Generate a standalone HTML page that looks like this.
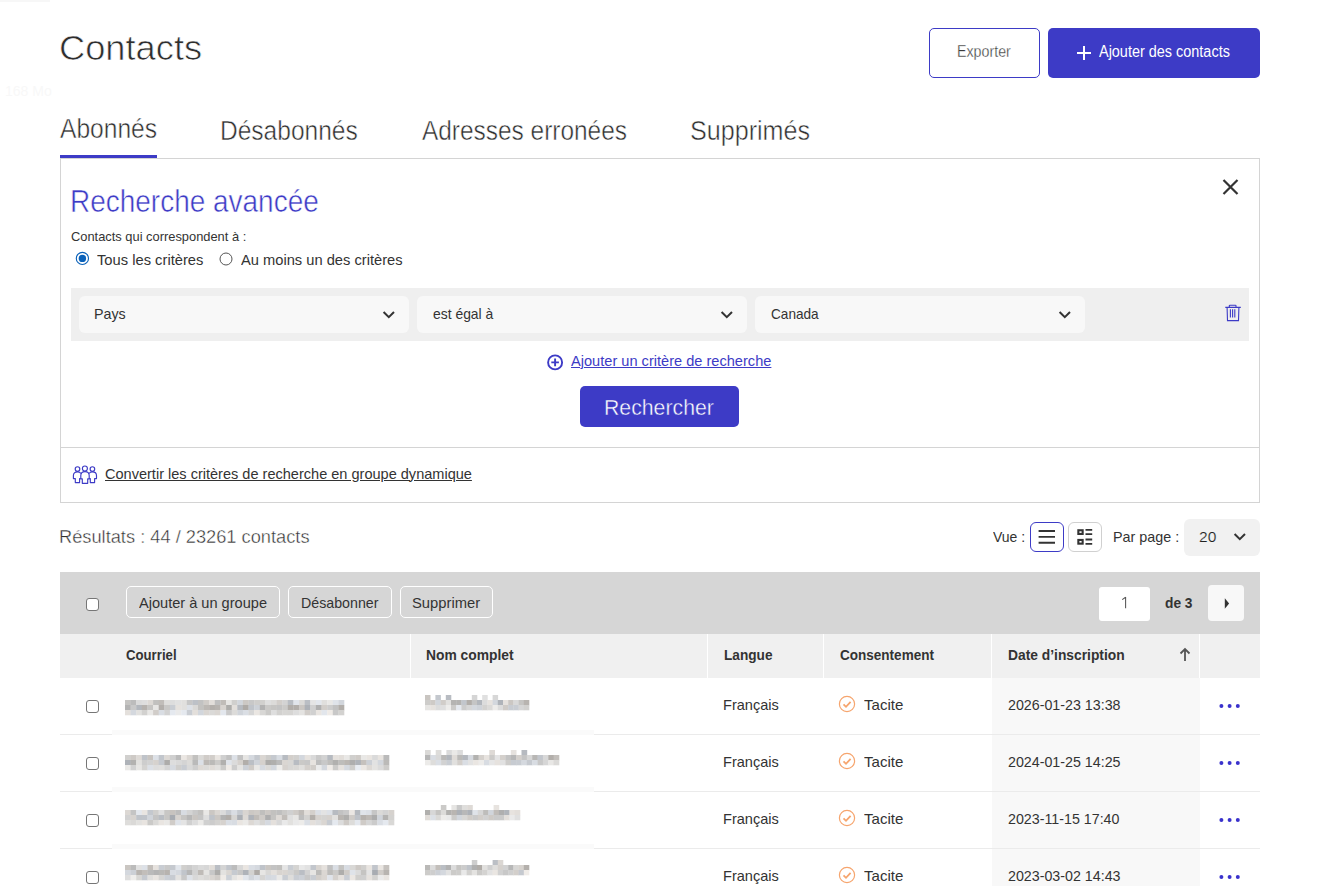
<!DOCTYPE html>
<html><head><meta charset="utf-8">
<style>
*{box-sizing:border-box;margin:0;padding:0}
html,body{width:1322px;height:886px;overflow:hidden;background:#fff}
body{position:relative;font-family:"Liberation Sans",sans-serif;color:#333}
.a{position:absolute;white-space:nowrap}
.t{position:absolute;white-space:nowrap;line-height:1;transform-origin:0 0}
.P{color:#3d3bc6}
.fr{font-size:15px;color:#333}
</style></head><body>

<!-- header -->
<div class="t" style="left:5px;top:84px;font-size:14px;color:#f8f8f8">168 Mo</div>
<div class="a" style="left:0;top:0;width:50px;height:2px;background:#f7f7f7"></div>

<div class="t" id="title" style="left:59.1px;top:31.0px;font-size:35.5px;color:#2e2e2e;-webkit-text-stroke:0.7px #fff;transform:scaleX(1.0215)">Contacts</div>
<div class="a" style="left:929px;top:28px;width:111px;height:50px;border:1px solid #3d3bc6;border-radius:5px"></div>
<div class="t" id="exp" style="left:957.3px;top:44.0px;font-size:15.8px;color:#3a3a3a;-webkit-text-stroke:0.3px #fff;transform:scaleX(0.9009)">Exporter</div>
<div class="a" style="left:1048px;top:28px;width:212px;height:50px;background:#3d3bc6;border-radius:5px"></div>
<svg class="a" style="left:1076px;top:45px" width="16" height="16"><path d="M8 1V15M1 8H15" stroke="#fff" stroke-width="2"/></svg>
<div class="t" id="addc" style="left:1099.0px;top:44.0px;font-size:15.8px;color:#fff;transform:scaleX(0.9143)">Ajouter des contacts</div>

<!-- tabs -->
<div class="t" id="tab1" style="left:60.0px;top:115.6px;font-size:26.8px;color:#2e2e2e;-webkit-text-stroke:0.5px #fff;transform:scaleX(0.9177)">Abonnés</div>
<div class="t" id="tab2" style="left:219.9px;top:118.0px;font-size:26.8px;color:#2e2e2e;-webkit-text-stroke:0.5px #fff;transform:scaleX(0.9152)">Désabonnés</div>
<div class="t" id="tab3" style="left:422.0px;top:118.0px;font-size:26.8px;color:#2e2e2e;-webkit-text-stroke:0.5px #fff;transform:scaleX(0.9114)">Adresses erronées</div>
<div class="t" id="tab4" style="left:689.6px;top:118.0px;font-size:26.8px;color:#2e2e2e;-webkit-text-stroke:0.5px #fff;transform:scaleX(0.9371)">Supprimés</div>
<div class="a" style="left:60px;top:155px;width:97px;height:3px;background:#3d3bc6"></div>

<!-- panel -->
<div class="a" style="left:60px;top:158px;width:1200px;height:345px;border:1px solid #d4d4d4"></div>
<div class="t P" id="rech" style="left:70.0px;top:186.4px;font-size:30.5px;-webkit-text-stroke:0.5px #fff;transform:scaleX(0.917)">Recherche avancée</div>
<svg class="a" style="left:1221px;top:178px" width="19" height="18"><path d="M2.5 2L16.5 16M16.5 2L2.5 16" stroke="#333" stroke-width="2.2"/></svg>
<div class="t" id="cqc" style="left:71.0px;top:230.0px;font-size:13.3px;color:#333;transform:scaleX(0.9675)">Contacts qui correspondent à :</div>
<svg class="a" style="left:75px;top:251px" width="15" height="15"><circle cx="7.4" cy="7.4" r="6.1" fill="#fff" stroke="#0a61b9" stroke-width="1.15"/><circle cx="7.4" cy="7.4" r="3.7" fill="#0a61b9"/></svg>
<div class="t" id="tous" style="left:96.8px;top:251.9px;font-size:15px;color:#333;transform:scaleX(0.9817)">Tous les critères</div>
<svg class="a" style="left:219px;top:252px" width="14" height="14"><circle cx="7" cy="7" r="6" fill="#fff" stroke="#555" stroke-width="1"/></svg>
<div class="t" id="aumoins" style="left:241.0px;top:252.3px;font-size:15px;color:#333;transform:scaleX(0.9787)">Au moins un des critères</div>

<div class="a" style="left:71px;top:288px;width:1178px;height:53px;background:#efefef"></div>
<div class="a" style="left:79px;top:296px;width:330px;height:37px;background:#f8f8f8;border-radius:6px"></div>
<div class="a" style="left:417px;top:296px;width:330px;height:37px;background:#f8f8f8;border-radius:6px"></div>
<div class="a" style="left:755px;top:296px;width:330px;height:37px;background:#f8f8f8;border-radius:6px"></div>
<div class="t" id="pays" style="left:93.6px;top:306.1px;font-size:15px;color:#333;transform:scaleX(0.9494)">Pays</div>
<div class="t" id="egal" style="left:432.9px;top:306.0px;font-size:15px;color:#333;transform:scaleX(0.9268)">est égal à</div>
<div class="t" id="canada" style="left:771.0px;top:306.0px;font-size:15px;color:#333;transform:scaleX(0.9068)">Canada</div>
<svg class="a" style="left:382px;top:309px" width="14" height="11"><path d="M1.6 3L6.8 8.2L12 3" fill="none" stroke="#333" stroke-width="2"/></svg>
<svg class="a" style="left:720px;top:309px" width="14" height="11"><path d="M1.6 3L6.8 8.2L12 3" fill="none" stroke="#333" stroke-width="2"/></svg>
<svg class="a" style="left:1058px;top:309px" width="14" height="11"><path d="M1.6 3L6.8 8.2L12 3" fill="none" stroke="#333" stroke-width="2"/></svg>
<svg class="a" style="left:1225px;top:304px" width="17" height="18"><path d="M0.3 3.4H15.8M4.3 3.4V1.8Q4.3 1.2 4.9 1.2H10.4Q11 1.2 11 1.8V3.4M2.1 3.4L2.5 16.6H13.5L13.9 3.4M5.4 5.2V13.4M7.6 5.2V13.4M9.8 5.2V13.4" fill="none" stroke="#3d3bc6" stroke-width="1.1"/></svg>

<svg class="a" style="left:546px;top:354px" width="18" height="17"><circle cx="9.1" cy="8.4" r="7" fill="none" stroke="#3d3bc6" stroke-width="1.9"/><path d="M9.1 4.6V12.2M5.3 8.4H12.9" stroke="#3d3bc6" stroke-width="1.9"/></svg>
<div class="t P" id="ajcrit" style="left:571.1px;top:352.6px;font-size:15px;text-decoration:underline;transform:scaleX(0.973)">Ajouter un critère de recherche</div>
<div class="a" style="left:580px;top:386px;width:159px;height:41px;background:#3d3bc6;border-radius:5px"></div>
<div class="t" id="rbtn" style="left:604.1px;top:396.6px;font-size:22px;color:#fff;-webkit-text-stroke:0.4px #3d3bc6;transform:scaleX(0.9661)">Rechercher</div>

<div class="a" style="left:61px;top:447px;width:1198px;height:1px;background:#d4d4d4"></div>
<svg class="a" style="left:68px;top:460px" width="34" height="30"><g fill="none" stroke="#3d3bc6" stroke-width="1.15" stroke-linejoin="round"><circle cx="9.5" cy="9" r="2.3"/><circle cx="16.9" cy="8.5" r="2.5"/><circle cx="24.4" cy="9" r="2.3"/><path d="M12.9 13.3Q11.7 11.9 9.5 11.9Q5.4 11.9 5.4 15.6V18.6H7.3V22.6H11.6V18.6H12.8"/><path d="M21.1 13.3Q22.3 11.9 24.4 11.9Q28.5 11.9 28.5 15.6V18.6H26.6V22.6H22.3V18.6H21.1"/><path d="M14.3 18.8H12.8V15.6Q12.8 11.6 17 11.6Q21.2 11.6 21.2 15.6V18.8H19.7V23.3H14.3Z"/></g></svg>
<div class="t" id="conv" style="left:105.0px;top:465.5px;font-size:15px;color:#333;text-decoration:underline;transform:scaleX(0.9693)">Convertir les critères de recherche en groupe dynamique</div>

<!-- results -->
<div class="t" id="res" style="left:58.7px;top:527.5px;font-size:18px;color:#2e2e2e;-webkit-text-stroke:0.4px #fff;transform:scaleX(1.0137)">Résultats : 44 / 23261 contacts</div>
<div class="t" id="vue" style="left:993.2px;top:529.4px;font-size:15px;color:#333;transform:scaleX(0.9333)">Vue :</div>
<div class="a" style="left:1030px;top:522px;width:34px;height:30px;border:1.3px solid #3d3bc6;border-radius:6px"></div>
<div class="a" style="left:1068px;top:522px;width:34px;height:30px;border:1.3px solid #d0d0d0;border-radius:6px"></div>
<svg class="a" style="left:1030px;top:522px" width="72" height="30"><path d="M8.6 9H25M8.6 14.9H25M8.6 20.8H25" stroke="#333" stroke-width="1.9"/><g fill="none" stroke="#333" stroke-width="2.1"><rect x="48.35" y="8.25" width="4.3" height="3.7"/><rect x="48.35" y="17.95" width="4.3" height="3.7"/></g><path d="M55.5 7.8H62.2M55.5 12.1H62.2M55.5 17.5H62.2M55.5 21.9H62.2" stroke="#333" stroke-width="1.8"/></svg>
<div class="t" id="parpage" style="left:1113.4px;top:529.4px;font-size:15px;color:#333;transform:scaleX(0.9564)">Par page :</div>
<div class="a" style="left:1184px;top:519px;width:76px;height:37px;background:#f1f1f1;border-radius:6px"></div>
<div class="t" id="vingt" style="left:1198.6px;top:529.3px;font-size:15px;color:#333;-webkit-text-stroke:0.2px #f1f1f1;color:#222;transform:scaleX(1.0365)">20</div>
<svg class="a" style="left:1233px;top:531px" width="14" height="11"><path d="M1.6 3L6.8 8.2L12 3" fill="none" stroke="#333" stroke-width="2"/></svg>

<!-- toolbar -->
<div class="a" style="left:60px;top:572px;width:1200px;height:62px;background:#d6d6d6"></div>
<div class="a" style="left:86px;top:598px;width:13px;height:13px;background:#fff;border:1px solid #767676;border-radius:3px"></div>
<div class="a" style="left:126px;top:586px;width:154px;height:32px;border:1px solid #fff;border-radius:5px"></div>
<div class="a" style="left:288px;top:586px;width:104px;height:32px;border:1px solid #fff;border-radius:5px"></div>
<div class="a" style="left:400px;top:586px;width:93px;height:32px;border:1px solid #fff;border-radius:5px"></div>
<div class="t" id="b1" style="left:139.0px;top:594.8px;font-size:15px;color:#333;transform:scaleX(0.9713)">Ajouter à un groupe</div>
<div class="t" id="b2" style="left:300.9px;top:594.8px;font-size:15px;color:#333;transform:scaleX(0.9474)">Désabonner</div>
<div class="t" id="b3" style="left:412.4px;top:594.8px;font-size:15px;color:#333;transform:scaleX(0.9844)">Supprimer</div>
<div class="a" style="left:1099px;top:587px;width:51px;height:34px;background:#fff;border-radius:3px"></div>
<svg class="a" style="left:1118px;top:594px" width="12" height="16"><path d="M7.6 3V14.2M4.2 5.6L7.6 3.2" fill="none" stroke="#555" stroke-width="1.05"/></svg>
<div class="t" id="de3" style="left:1164.6px;top:594.8px;font-size:15px;color:#333;font-weight:bold;transform:scaleX(0.9166)">de 3</div>
<div class="a" style="left:1208px;top:585px;width:36px;height:36px;background:#f8f8f8;border-radius:4px"></div>
<svg class="a" style="left:1222px;top:597px" width="9" height="13"><path d="M2.8 1.2L7.1 6.5L2.8 11.8Z" fill="#333"/></svg>

<!-- header row -->
<div class="a" style="left:60px;top:634px;width:1200px;height:44px;background:#f0f0f0"></div>
<div class="a" style="left:410px;top:634px;width:1px;height:44px;background:#fff"></div>
<div class="a" style="left:707px;top:634px;width:1px;height:44px;background:#fff"></div>
<div class="a" style="left:823px;top:634px;width:1px;height:44px;background:#fff"></div>
<div class="a" style="left:991px;top:634px;width:1px;height:44px;background:#fff"></div>
<div class="a" style="left:1199px;top:634px;width:1px;height:44px;background:#fff"></div>
<div class="t" id="h1" style="left:125.7px;top:647.1px;font-size:15px;color:#333;font-weight:bold;transform:scaleX(0.8788)">Courriel</div>
<div class="t" id="h2" style="left:426.1px;top:647.1px;font-size:15px;color:#333;font-weight:bold;transform:scaleX(0.9221)">Nom complet</div>
<div class="t" id="h3" style="left:723.8px;top:647.1px;font-size:15px;color:#333;font-weight:bold;transform:scaleX(0.9095)">Langue</div>
<div class="t" id="h4" style="left:840.0px;top:647.1px;font-size:15px;color:#333;font-weight:bold;transform:scaleX(0.9019)">Consentement</div>
<div class="t" id="h5" style="left:1007.5px;top:647.4px;font-size:15px;color:#333;font-weight:bold;transform:scaleX(0.9207)">Date d’inscription</div>
<svg class="a" style="left:1179px;top:647px" width="12" height="16"><path d="M6 2V14M1.5 6.5L6 2L10.5 6.5" fill="none" stroke="#555" stroke-width="1.8"/></svg>

<!-- rows -->
<!--ROWS-->
<div class="a" style="left:992px;top:678px;width:208px;height:208px;background:#f8f8f8"></div>
<div class="a" style="left:60px;top:734px;width:52px;height:1px;background:#ebebeb"></div>
<div class="a" style="left:112px;top:730px;width:482px;height:5px;background:#fafafa"></div>
<div class="a" style="left:594px;top:734px;width:666px;height:1px;background:#ebebeb"></div>
<div class="a" style="left:86px;top:700px;width:13px;height:13px;background:#fff;border:1px solid #767676;border-radius:3px"></div>
<div class="t fr" id=fr0 style="left:722.7px;top:697.0px;transform:scaleX(0.9696)">Français</div>
<svg class="a" style="left:838px;top:695px" width="18" height="18"><circle cx="9" cy="9" r="7.6" fill="none" stroke="#f6a56e" stroke-width="1.2"/><path d="M5.5 9.3L8 11.8L12.6 6.8" fill="none" stroke="#f6a56e" stroke-width="1.8"/></svg>
<div class="t fr" id=tac0 style="left:863.5px;top:697.0px;transform:scaleX(1.003)">Tacite</div>
<div class="t fr" id=dt0 style="left:1008.3px;top:697.0px;transform:scaleX(0.9499)">2026-01-23 13:38</div>
<svg class="a" style="left:1217px;top:702px" width="26" height="8"><circle cx="4.4" cy="4" r="2" fill="#3a32cc"/><circle cx="12.6" cy="4" r="2" fill="#3a32cc"/><circle cx="20.8" cy="4" r="2" fill="#3a32cc"/></svg>
<div class="a" style="left:60px;top:791px;width:52px;height:1px;background:#ebebeb"></div>
<div class="a" style="left:112px;top:787px;width:482px;height:5px;background:#fafafa"></div>
<div class="a" style="left:594px;top:791px;width:666px;height:1px;background:#ebebeb"></div>
<div class="a" style="left:86px;top:757px;width:13px;height:13px;background:#fff;border:1px solid #767676;border-radius:3px"></div>
<div class="t fr" style="left:722.7px;top:754.0px;transform:scaleX(0.9696)">Français</div>
<svg class="a" style="left:838px;top:752px" width="18" height="18"><circle cx="9" cy="9" r="7.6" fill="none" stroke="#f6a56e" stroke-width="1.2"/><path d="M5.5 9.3L8 11.8L12.6 6.8" fill="none" stroke="#f6a56e" stroke-width="1.8"/></svg>
<div class="t fr" style="left:863.5px;top:754.0px;transform:scaleX(1.003)">Tacite</div>
<div class="t fr" style="left:1008.3px;top:754.0px;transform:scaleX(0.9499)">2024-01-25 14:25</div>
<svg class="a" style="left:1217px;top:759px" width="26" height="8"><circle cx="4.4" cy="4" r="2" fill="#3a32cc"/><circle cx="12.6" cy="4" r="2" fill="#3a32cc"/><circle cx="20.8" cy="4" r="2" fill="#3a32cc"/></svg>
<div class="a" style="left:60px;top:848px;width:52px;height:1px;background:#ebebeb"></div>
<div class="a" style="left:112px;top:844px;width:482px;height:5px;background:#fafafa"></div>
<div class="a" style="left:594px;top:848px;width:666px;height:1px;background:#ebebeb"></div>
<div class="a" style="left:86px;top:814px;width:13px;height:13px;background:#fff;border:1px solid #767676;border-radius:3px"></div>
<div class="t fr" style="left:722.7px;top:811.0px;transform:scaleX(0.9696)">Français</div>
<svg class="a" style="left:838px;top:809px" width="18" height="18"><circle cx="9" cy="9" r="7.6" fill="none" stroke="#f6a56e" stroke-width="1.2"/><path d="M5.5 9.3L8 11.8L12.6 6.8" fill="none" stroke="#f6a56e" stroke-width="1.8"/></svg>
<div class="t fr" style="left:863.5px;top:811.0px;transform:scaleX(1.003)">Tacite</div>
<div class="t fr" style="left:1008.3px;top:811.0px;transform:scaleX(0.9499)">2023-11-15 17:40</div>
<svg class="a" style="left:1217px;top:816px" width="26" height="8"><circle cx="4.4" cy="4" r="2" fill="#3a32cc"/><circle cx="12.6" cy="4" r="2" fill="#3a32cc"/><circle cx="20.8" cy="4" r="2" fill="#3a32cc"/></svg>
<div class="a" style="left:86px;top:871px;width:13px;height:13px;background:#fff;border:1px solid #767676;border-radius:3px"></div>
<div class="t fr" style="left:722.7px;top:868.0px;transform:scaleX(0.9696)">Français</div>
<svg class="a" style="left:838px;top:866px" width="18" height="18"><circle cx="9" cy="9" r="7.6" fill="none" stroke="#f6a56e" stroke-width="1.2"/><path d="M5.5 9.3L8 11.8L12.6 6.8" fill="none" stroke="#f6a56e" stroke-width="1.8"/></svg>
<div class="t fr" style="left:863.5px;top:868.0px;transform:scaleX(1.003)">Tacite</div>
<div class="t fr" style="left:1008.3px;top:868.0px;transform:scaleX(0.9499)">2023-03-02 14:43</div>
<svg class="a" style="left:1217px;top:873px" width="26" height="8"><circle cx="4.4" cy="4" r="2" fill="#3a32cc"/><circle cx="12.6" cy="4" r="2" fill="#3a32cc"/><circle cx="20.8" cy="4" r="2" fill="#3a32cc"/></svg>
<svg class="a" style="left:0;top:0" width="1322" height="886"><rect x="125.0" y="700" width="5.9" height="5.3" fill="rgb(197, 196, 194)"/><rect x="130.6" y="700" width="5.9" height="5.3" fill="rgb(188, 188, 188)"/><rect x="136.2" y="700" width="5.9" height="5.3" fill="rgb(219, 219, 219)"/><rect x="141.8" y="700" width="5.9" height="5.3" fill="rgb(222, 222, 222)"/><rect x="147.5" y="700" width="5.9" height="5.3" fill="rgb(221, 217, 213)"/><rect x="153.1" y="700" width="5.9" height="5.3" fill="rgb(193, 192, 190)"/><rect x="158.7" y="700" width="5.9" height="5.3" fill="rgb(193, 189, 185)"/><rect x="164.3" y="700" width="5.9" height="5.3" fill="rgb(223, 222, 220)"/><rect x="169.9" y="700" width="5.9" height="5.3" fill="rgb(221, 221, 221)"/><rect x="175.5" y="700" width="5.9" height="5.3" fill="rgb(225, 225, 225)"/><rect x="181.2" y="700" width="5.9" height="5.3" fill="rgb(225, 224, 222)"/><rect x="186.8" y="700" width="5.9" height="5.3" fill="rgb(199, 199, 199)"/><rect x="192.4" y="700" width="5.9" height="5.3" fill="rgb(189, 193, 199)"/><rect x="198.0" y="700" width="5.9" height="5.3" fill="rgb(194, 194, 194)"/><rect x="203.6" y="700" width="5.9" height="5.3" fill="rgb(208, 204, 200)"/><rect x="209.2" y="700" width="5.9" height="5.3" fill="rgb(226, 222, 218)"/><rect x="214.8" y="700" width="5.9" height="5.3" fill="rgb(191, 191, 191)"/><rect x="220.5" y="700" width="5.9" height="5.3" fill="rgb(192, 188, 184)"/><rect x="226.1" y="700" width="5.9" height="5.3" fill="rgb(231, 230, 228)"/><rect x="231.7" y="700" width="5.9" height="5.3" fill="rgb(208, 207, 205)"/><rect x="237.3" y="700" width="5.9" height="5.3" fill="rgb(210, 214, 220)"/><rect x="242.9" y="700" width="5.9" height="5.3" fill="rgb(204, 200, 196)"/><rect x="248.5" y="700" width="5.9" height="5.3" fill="rgb(200, 200, 200)"/><rect x="254.2" y="700" width="5.9" height="5.3" fill="rgb(207, 206, 204)"/><rect x="259.8" y="700" width="5.9" height="5.3" fill="rgb(209, 208, 206)"/><rect x="265.4" y="700" width="5.9" height="5.3" fill="rgb(223, 223, 223)"/><rect x="271.0" y="700" width="5.9" height="5.3" fill="rgb(220, 219, 217)"/><rect x="276.6" y="700" width="5.9" height="5.3" fill="rgb(210, 206, 202)"/><rect x="282.2" y="700" width="5.9" height="5.3" fill="rgb(211, 211, 211)"/><rect x="287.8" y="700" width="5.9" height="5.3" fill="rgb(185, 189, 195)"/><rect x="293.5" y="700" width="5.9" height="5.3" fill="rgb(225, 229, 235)"/><rect x="299.1" y="700" width="5.9" height="5.3" fill="rgb(219, 218, 216)"/><rect x="304.7" y="700" width="5.9" height="5.3" fill="rgb(186, 190, 196)"/><rect x="310.3" y="700" width="5.9" height="5.3" fill="rgb(229, 229, 229)"/><rect x="315.9" y="700" width="5.9" height="5.3" fill="rgb(227, 231, 237)"/><rect x="321.5" y="700" width="5.9" height="5.3" fill="rgb(224, 223, 221)"/><rect x="327.2" y="700" width="5.9" height="5.3" fill="rgb(233, 232, 230)"/><rect x="332.8" y="700" width="5.9" height="5.3" fill="rgb(223, 227, 233)"/><rect x="338.4" y="700" width="5.9" height="5.3" fill="rgb(210, 214, 220)"/><rect x="125.0" y="705" width="5.9" height="5.3" fill="rgb(180, 180, 180)"/><rect x="130.6" y="705" width="5.9" height="5.3" fill="rgb(201, 201, 201)"/><rect x="136.2" y="705" width="5.9" height="5.3" fill="rgb(179, 183, 189)"/><rect x="141.8" y="705" width="5.9" height="5.3" fill="rgb(182, 178, 174)"/><rect x="147.5" y="705" width="5.9" height="5.3" fill="rgb(198, 197, 195)"/><rect x="153.1" y="705" width="5.9" height="5.3" fill="rgb(231, 230, 228)"/><rect x="158.7" y="705" width="5.9" height="5.3" fill="rgb(179, 175, 171)"/><rect x="164.3" y="705" width="5.9" height="5.3" fill="rgb(201, 200, 198)"/><rect x="169.9" y="705" width="5.9" height="5.3" fill="rgb(201, 205, 211)"/><rect x="175.5" y="705" width="5.9" height="5.3" fill="rgb(230, 226, 222)"/><rect x="181.2" y="705" width="5.9" height="5.3" fill="rgb(225, 224, 222)"/><rect x="186.8" y="705" width="5.9" height="5.3" fill="rgb(221, 225, 231)"/><rect x="192.4" y="705" width="5.9" height="5.3" fill="rgb(218, 217, 215)"/><rect x="198.0" y="705" width="5.9" height="5.3" fill="rgb(195, 194, 192)"/><rect x="203.6" y="705" width="5.9" height="5.3" fill="rgb(188, 184, 180)"/><rect x="209.2" y="705" width="5.9" height="5.3" fill="rgb(179, 175, 171)"/><rect x="214.8" y="705" width="5.9" height="5.3" fill="rgb(183, 179, 175)"/><rect x="220.5" y="705" width="5.9" height="5.3" fill="rgb(216, 212, 208)"/><rect x="226.1" y="705" width="5.9" height="5.3" fill="rgb(173, 172, 170)"/><rect x="231.7" y="705" width="5.9" height="5.3" fill="rgb(227, 223, 219)"/><rect x="237.3" y="705" width="5.9" height="5.3" fill="rgb(182, 186, 192)"/><rect x="242.9" y="705" width="5.9" height="5.3" fill="rgb(174, 170, 166)"/><rect x="248.5" y="705" width="5.9" height="5.3" fill="rgb(192, 196, 202)"/><rect x="254.2" y="705" width="5.9" height="5.3" fill="rgb(205, 209, 215)"/><rect x="259.8" y="705" width="5.9" height="5.3" fill="rgb(178, 178, 178)"/><rect x="265.4" y="705" width="5.9" height="5.3" fill="rgb(202, 201, 199)"/><rect x="271.0" y="705" width="5.9" height="5.3" fill="rgb(198, 197, 195)"/><rect x="276.6" y="705" width="5.9" height="5.3" fill="rgb(195, 195, 195)"/><rect x="282.2" y="705" width="5.9" height="5.3" fill="rgb(203, 202, 200)"/><rect x="287.8" y="705" width="5.9" height="5.3" fill="rgb(177, 173, 169)"/><rect x="293.5" y="705" width="5.9" height="5.3" fill="rgb(178, 174, 170)"/><rect x="299.1" y="705" width="5.9" height="5.3" fill="rgb(202, 198, 194)"/><rect x="304.7" y="705" width="5.9" height="5.3" fill="rgb(173, 177, 183)"/><rect x="310.3" y="705" width="5.9" height="5.3" fill="rgb(208, 208, 208)"/><rect x="315.9" y="705" width="5.9" height="5.3" fill="rgb(176, 176, 176)"/><rect x="321.5" y="705" width="5.9" height="5.3" fill="rgb(210, 206, 202)"/><rect x="327.2" y="705" width="5.9" height="5.3" fill="rgb(204, 204, 204)"/><rect x="332.8" y="705" width="5.9" height="5.3" fill="rgb(193, 193, 193)"/><rect x="338.4" y="705" width="5.9" height="5.3" fill="rgb(178, 174, 170)"/><rect x="125.0" y="710" width="5.9" height="5.3" fill="rgb(228, 224, 220)"/><rect x="130.6" y="710" width="5.9" height="5.3" fill="rgb(212, 216, 222)"/><rect x="136.2" y="710" width="5.9" height="5.3" fill="rgb(226, 225, 223)"/><rect x="141.8" y="710" width="5.9" height="5.3" fill="rgb(210, 209, 207)"/><rect x="147.5" y="710" width="5.9" height="5.3" fill="rgb(233, 232, 230)"/><rect x="153.1" y="710" width="5.9" height="5.3" fill="rgb(209, 205, 201)"/><rect x="158.7" y="710" width="5.9" height="5.3" fill="rgb(217, 221, 227)"/><rect x="164.3" y="710" width="5.9" height="5.3" fill="rgb(210, 210, 210)"/><rect x="169.9" y="710" width="5.9" height="5.3" fill="rgb(229, 233, 239)"/><rect x="175.5" y="710" width="5.9" height="5.3" fill="rgb(234, 234, 234)"/><rect x="181.2" y="710" width="5.9" height="5.3" fill="rgb(229, 233, 239)"/><rect x="186.8" y="710" width="5.9" height="5.3" fill="rgb(201, 205, 211)"/><rect x="192.4" y="710" width="5.9" height="5.3" fill="rgb(227, 223, 219)"/><rect x="198.0" y="710" width="5.9" height="5.3" fill="rgb(210, 214, 220)"/><rect x="203.6" y="710" width="5.9" height="5.3" fill="rgb(218, 214, 210)"/><rect x="209.2" y="710" width="5.9" height="5.3" fill="rgb(218, 217, 215)"/><rect x="214.8" y="710" width="5.9" height="5.3" fill="rgb(218, 214, 210)"/><rect x="220.5" y="710" width="5.9" height="5.3" fill="rgb(227, 231, 237)"/><rect x="226.1" y="710" width="5.9" height="5.3" fill="rgb(201, 201, 201)"/><rect x="231.7" y="710" width="5.9" height="5.3" fill="rgb(220, 219, 217)"/><rect x="237.3" y="710" width="5.9" height="5.3" fill="rgb(208, 212, 218)"/><rect x="242.9" y="710" width="5.9" height="5.3" fill="rgb(218, 222, 228)"/><rect x="248.5" y="710" width="5.9" height="5.3" fill="rgb(214, 214, 214)"/><rect x="254.2" y="710" width="5.9" height="5.3" fill="rgb(234, 230, 226)"/><rect x="259.8" y="710" width="5.9" height="5.3" fill="rgb(216, 215, 213)"/><rect x="265.4" y="710" width="5.9" height="5.3" fill="rgb(203, 202, 200)"/><rect x="271.0" y="710" width="5.9" height="5.3" fill="rgb(222, 222, 222)"/><rect x="276.6" y="710" width="5.9" height="5.3" fill="rgb(210, 209, 207)"/><rect x="282.2" y="710" width="5.9" height="5.3" fill="rgb(215, 214, 212)"/><rect x="287.8" y="710" width="5.9" height="5.3" fill="rgb(214, 213, 211)"/><rect x="293.5" y="710" width="5.9" height="5.3" fill="rgb(221, 221, 221)"/><rect x="299.1" y="710" width="5.9" height="5.3" fill="rgb(228, 227, 225)"/><rect x="304.7" y="710" width="5.9" height="5.3" fill="rgb(209, 205, 201)"/><rect x="310.3" y="710" width="5.9" height="5.3" fill="rgb(208, 208, 208)"/><rect x="315.9" y="710" width="5.9" height="5.3" fill="rgb(233, 229, 225)"/><rect x="321.5" y="710" width="5.9" height="5.3" fill="rgb(226, 230, 236)"/><rect x="327.2" y="710" width="5.9" height="5.3" fill="rgb(239, 235, 231)"/><rect x="332.8" y="710" width="5.9" height="5.3" fill="rgb(200, 200, 200)"/><rect x="338.4" y="710" width="5.9" height="5.3" fill="rgb(211, 210, 208)"/><rect x="425.0" y="695" width="5.5" height="5.3" fill="rgb(201, 197, 193)"/><rect x="435.4" y="695" width="5.5" height="5.3" fill="rgb(196, 200, 206)"/><rect x="445.8" y="695" width="5.5" height="5.3" fill="rgb(184, 188, 194)"/><rect x="471.8" y="695" width="5.5" height="5.3" fill="rgb(213, 213, 213)"/><rect x="482.2" y="695" width="5.5" height="5.3" fill="rgb(224, 224, 224)"/><rect x="492.6" y="695" width="5.5" height="5.3" fill="rgb(215, 215, 215)"/><rect x="425.0" y="700" width="5.5" height="5.3" fill="rgb(205, 204, 202)"/><rect x="430.2" y="700" width="5.5" height="5.3" fill="rgb(206, 202, 198)"/><rect x="435.4" y="700" width="5.5" height="5.3" fill="rgb(210, 214, 220)"/><rect x="440.6" y="700" width="5.5" height="5.3" fill="rgb(209, 205, 201)"/><rect x="445.8" y="700" width="5.5" height="5.3" fill="rgb(226, 225, 223)"/><rect x="451.0" y="700" width="5.5" height="5.3" fill="rgb(181, 180, 178)"/><rect x="456.2" y="700" width="5.5" height="5.3" fill="rgb(180, 179, 177)"/><rect x="461.4" y="700" width="5.5" height="5.3" fill="rgb(194, 198, 204)"/><rect x="466.6" y="700" width="5.5" height="5.3" fill="rgb(178, 174, 170)"/><rect x="471.8" y="700" width="5.5" height="5.3" fill="rgb(197, 197, 197)"/><rect x="477.0" y="700" width="5.5" height="5.3" fill="rgb(179, 183, 189)"/><rect x="482.2" y="700" width="5.5" height="5.3" fill="rgb(220, 220, 220)"/><rect x="487.4" y="700" width="5.5" height="5.3" fill="rgb(231, 227, 223)"/><rect x="492.6" y="700" width="5.5" height="5.3" fill="rgb(211, 215, 221)"/><rect x="497.8" y="700" width="5.5" height="5.3" fill="rgb(175, 179, 185)"/><rect x="503.0" y="700" width="5.5" height="5.3" fill="rgb(230, 226, 222)"/><rect x="508.2" y="700" width="5.5" height="5.3" fill="rgb(203, 199, 195)"/><rect x="513.4" y="700" width="5.5" height="5.3" fill="rgb(217, 217, 217)"/><rect x="518.6" y="700" width="5.5" height="5.3" fill="rgb(198, 197, 195)"/><rect x="523.8" y="700" width="5.5" height="5.3" fill="rgb(184, 180, 176)"/><rect x="425.0" y="705" width="5.5" height="5.3" fill="rgb(230, 229, 227)"/><rect x="430.2" y="705" width="5.5" height="5.3" fill="rgb(230, 226, 222)"/><rect x="435.4" y="705" width="5.5" height="5.3" fill="rgb(220, 220, 220)"/><rect x="440.6" y="705" width="5.5" height="5.3" fill="rgb(223, 223, 223)"/><rect x="445.8" y="705" width="5.5" height="5.3" fill="rgb(238, 237, 235)"/><rect x="451.0" y="705" width="5.5" height="5.3" fill="rgb(204, 203, 201)"/><rect x="456.2" y="705" width="5.5" height="5.3" fill="rgb(229, 233, 239)"/><rect x="461.4" y="705" width="5.5" height="5.3" fill="rgb(204, 204, 204)"/><rect x="466.6" y="705" width="5.5" height="5.3" fill="rgb(214, 214, 214)"/><rect x="471.8" y="705" width="5.5" height="5.3" fill="rgb(212, 216, 222)"/><rect x="477.0" y="705" width="5.5" height="5.3" fill="rgb(207, 211, 217)"/><rect x="482.2" y="705" width="5.5" height="5.3" fill="rgb(211, 210, 208)"/><rect x="487.4" y="705" width="5.5" height="5.3" fill="rgb(219, 218, 216)"/><rect x="492.6" y="705" width="5.5" height="5.3" fill="rgb(237, 236, 234)"/><rect x="497.8" y="705" width="5.5" height="5.3" fill="rgb(220, 220, 220)"/><rect x="503.0" y="705" width="5.5" height="5.3" fill="rgb(207, 203, 199)"/><rect x="508.2" y="705" width="5.5" height="5.3" fill="rgb(200, 204, 210)"/><rect x="513.4" y="705" width="5.5" height="5.3" fill="rgb(201, 205, 211)"/><rect x="518.6" y="705" width="5.5" height="5.3" fill="rgb(214, 214, 214)"/><rect x="523.8" y="705" width="5.5" height="5.3" fill="rgb(210, 209, 207)"/><rect x="125.0" y="755" width="5.9" height="5.3" fill="rgb(209, 208, 206)"/><rect x="130.6" y="755" width="5.9" height="5.3" fill="rgb(206, 202, 198)"/><rect x="136.2" y="755" width="5.9" height="5.3" fill="rgb(222, 218, 214)"/><rect x="141.9" y="755" width="5.9" height="5.3" fill="rgb(191, 195, 201)"/><rect x="147.5" y="755" width="5.9" height="5.3" fill="rgb(200, 196, 192)"/><rect x="153.1" y="755" width="5.9" height="5.3" fill="rgb(221, 225, 231)"/><rect x="158.7" y="755" width="5.9" height="5.3" fill="rgb(194, 198, 204)"/><rect x="164.3" y="755" width="5.9" height="5.3" fill="rgb(221, 217, 213)"/><rect x="169.9" y="755" width="5.9" height="5.3" fill="rgb(207, 207, 207)"/><rect x="175.6" y="755" width="5.9" height="5.3" fill="rgb(187, 187, 187)"/><rect x="181.2" y="755" width="5.9" height="5.3" fill="rgb(235, 231, 227)"/><rect x="186.8" y="755" width="5.9" height="5.3" fill="rgb(219, 215, 211)"/><rect x="192.4" y="755" width="5.9" height="5.3" fill="rgb(194, 193, 191)"/><rect x="198.0" y="755" width="5.9" height="5.3" fill="rgb(219, 218, 216)"/><rect x="203.6" y="755" width="5.9" height="5.3" fill="rgb(208, 204, 200)"/><rect x="209.3" y="755" width="5.9" height="5.3" fill="rgb(210, 206, 202)"/><rect x="214.9" y="755" width="5.9" height="5.3" fill="rgb(234, 230, 226)"/><rect x="220.5" y="755" width="5.9" height="5.3" fill="rgb(207, 207, 207)"/><rect x="226.1" y="755" width="5.9" height="5.3" fill="rgb(193, 193, 193)"/><rect x="231.7" y="755" width="5.9" height="5.3" fill="rgb(221, 225, 231)"/><rect x="237.3" y="755" width="5.9" height="5.3" fill="rgb(195, 195, 195)"/><rect x="243.0" y="755" width="5.9" height="5.3" fill="rgb(230, 229, 227)"/><rect x="248.6" y="755" width="5.9" height="5.3" fill="rgb(213, 217, 223)"/><rect x="254.2" y="755" width="5.9" height="5.3" fill="rgb(196, 200, 206)"/><rect x="259.8" y="755" width="5.9" height="5.3" fill="rgb(218, 214, 210)"/><rect x="265.4" y="755" width="5.9" height="5.3" fill="rgb(205, 204, 202)"/><rect x="271.0" y="755" width="5.9" height="5.3" fill="rgb(197, 201, 207)"/><rect x="276.7" y="755" width="5.9" height="5.3" fill="rgb(216, 220, 226)"/><rect x="282.3" y="755" width="5.9" height="5.3" fill="rgb(183, 187, 193)"/><rect x="287.9" y="755" width="5.9" height="5.3" fill="rgb(211, 207, 203)"/><rect x="293.5" y="755" width="5.9" height="5.3" fill="rgb(209, 208, 206)"/><rect x="299.1" y="755" width="5.9" height="5.3" fill="rgb(211, 215, 221)"/><rect x="304.7" y="755" width="5.9" height="5.3" fill="rgb(230, 226, 222)"/><rect x="310.4" y="755" width="5.9" height="5.3" fill="rgb(217, 217, 217)"/><rect x="316.0" y="755" width="5.9" height="5.3" fill="rgb(201, 201, 201)"/><rect x="321.6" y="755" width="5.9" height="5.3" fill="rgb(210, 210, 210)"/><rect x="327.2" y="755" width="5.9" height="5.3" fill="rgb(182, 186, 192)"/><rect x="332.8" y="755" width="5.9" height="5.3" fill="rgb(229, 225, 221)"/><rect x="338.4" y="755" width="5.9" height="5.3" fill="rgb(226, 222, 218)"/><rect x="344.1" y="755" width="5.9" height="5.3" fill="rgb(233, 232, 230)"/><rect x="349.7" y="755" width="5.9" height="5.3" fill="rgb(208, 207, 205)"/><rect x="355.3" y="755" width="5.9" height="5.3" fill="rgb(207, 203, 199)"/><rect x="360.9" y="755" width="5.9" height="5.3" fill="rgb(233, 232, 230)"/><rect x="366.5" y="755" width="5.9" height="5.3" fill="rgb(233, 229, 225)"/><rect x="372.1" y="755" width="5.9" height="5.3" fill="rgb(218, 218, 218)"/><rect x="377.8" y="755" width="5.9" height="5.3" fill="rgb(232, 228, 224)"/><rect x="383.4" y="755" width="5.9" height="5.3" fill="rgb(186, 186, 186)"/><rect x="125.0" y="760" width="5.9" height="5.3" fill="rgb(174, 178, 184)"/><rect x="130.6" y="760" width="5.9" height="5.3" fill="rgb(179, 178, 176)"/><rect x="136.2" y="760" width="5.9" height="5.3" fill="rgb(226, 225, 223)"/><rect x="141.9" y="760" width="5.9" height="5.3" fill="rgb(205, 205, 205)"/><rect x="147.5" y="760" width="5.9" height="5.3" fill="rgb(210, 210, 210)"/><rect x="153.1" y="760" width="5.9" height="5.3" fill="rgb(214, 210, 206)"/><rect x="158.7" y="760" width="5.9" height="5.3" fill="rgb(197, 201, 207)"/><rect x="164.3" y="760" width="5.9" height="5.3" fill="rgb(173, 172, 170)"/><rect x="169.9" y="760" width="5.9" height="5.3" fill="rgb(221, 221, 221)"/><rect x="175.6" y="760" width="5.9" height="5.3" fill="rgb(217, 217, 217)"/><rect x="181.2" y="760" width="5.9" height="5.3" fill="rgb(212, 212, 212)"/><rect x="186.8" y="760" width="5.9" height="5.3" fill="rgb(220, 219, 217)"/><rect x="192.4" y="760" width="5.9" height="5.3" fill="rgb(186, 186, 186)"/><rect x="198.0" y="760" width="5.9" height="5.3" fill="rgb(220, 224, 230)"/><rect x="203.6" y="760" width="5.9" height="5.3" fill="rgb(189, 185, 181)"/><rect x="209.3" y="760" width="5.9" height="5.3" fill="rgb(187, 186, 184)"/><rect x="214.9" y="760" width="5.9" height="5.3" fill="rgb(204, 203, 201)"/><rect x="220.5" y="760" width="5.9" height="5.3" fill="rgb(177, 176, 174)"/><rect x="226.1" y="760" width="5.9" height="5.3" fill="rgb(224, 228, 234)"/><rect x="231.7" y="760" width="5.9" height="5.3" fill="rgb(219, 219, 219)"/><rect x="237.3" y="760" width="5.9" height="5.3" fill="rgb(213, 209, 205)"/><rect x="243.0" y="760" width="5.9" height="5.3" fill="rgb(178, 174, 170)"/><rect x="248.6" y="760" width="5.9" height="5.3" fill="rgb(187, 191, 197)"/><rect x="254.2" y="760" width="5.9" height="5.3" fill="rgb(207, 211, 217)"/><rect x="259.8" y="760" width="5.9" height="5.3" fill="rgb(213, 209, 205)"/><rect x="265.4" y="760" width="5.9" height="5.3" fill="rgb(173, 172, 170)"/><rect x="271.0" y="760" width="5.9" height="5.3" fill="rgb(176, 175, 173)"/><rect x="276.7" y="760" width="5.9" height="5.3" fill="rgb(187, 187, 187)"/><rect x="282.3" y="760" width="5.9" height="5.3" fill="rgb(218, 214, 210)"/><rect x="287.9" y="760" width="5.9" height="5.3" fill="rgb(216, 215, 213)"/><rect x="293.5" y="760" width="5.9" height="5.3" fill="rgb(184, 188, 194)"/><rect x="299.1" y="760" width="5.9" height="5.3" fill="rgb(202, 201, 199)"/><rect x="304.7" y="760" width="5.9" height="5.3" fill="rgb(199, 199, 199)"/><rect x="310.4" y="760" width="5.9" height="5.3" fill="rgb(231, 227, 223)"/><rect x="316.0" y="760" width="5.9" height="5.3" fill="rgb(189, 189, 189)"/><rect x="321.6" y="760" width="5.9" height="5.3" fill="rgb(200, 200, 200)"/><rect x="327.2" y="760" width="5.9" height="5.3" fill="rgb(191, 190, 188)"/><rect x="332.8" y="760" width="5.9" height="5.3" fill="rgb(177, 176, 174)"/><rect x="338.4" y="760" width="5.9" height="5.3" fill="rgb(190, 189, 187)"/><rect x="344.1" y="760" width="5.9" height="5.3" fill="rgb(187, 183, 179)"/><rect x="349.7" y="760" width="5.9" height="5.3" fill="rgb(174, 174, 174)"/><rect x="355.3" y="760" width="5.9" height="5.3" fill="rgb(175, 179, 185)"/><rect x="360.9" y="760" width="5.9" height="5.3" fill="rgb(197, 193, 189)"/><rect x="366.5" y="760" width="5.9" height="5.3" fill="rgb(204, 208, 214)"/><rect x="372.1" y="760" width="5.9" height="5.3" fill="rgb(226, 226, 226)"/><rect x="377.8" y="760" width="5.9" height="5.3" fill="rgb(211, 215, 221)"/><rect x="383.4" y="760" width="5.9" height="5.3" fill="rgb(187, 186, 184)"/><rect x="125.0" y="765" width="5.9" height="5.3" fill="rgb(234, 233, 231)"/><rect x="130.6" y="765" width="5.9" height="5.3" fill="rgb(210, 210, 210)"/><rect x="136.2" y="765" width="5.9" height="5.3" fill="rgb(231, 230, 228)"/><rect x="141.9" y="765" width="5.9" height="5.3" fill="rgb(212, 211, 209)"/><rect x="147.5" y="765" width="5.9" height="5.3" fill="rgb(220, 224, 230)"/><rect x="153.1" y="765" width="5.9" height="5.3" fill="rgb(221, 221, 221)"/><rect x="158.7" y="765" width="5.9" height="5.3" fill="rgb(224, 223, 221)"/><rect x="164.3" y="765" width="5.9" height="5.3" fill="rgb(212, 212, 212)"/><rect x="169.9" y="765" width="5.9" height="5.3" fill="rgb(214, 218, 224)"/><rect x="175.6" y="765" width="5.9" height="5.3" fill="rgb(207, 206, 204)"/><rect x="181.2" y="765" width="5.9" height="5.3" fill="rgb(200, 204, 210)"/><rect x="186.8" y="765" width="5.9" height="5.3" fill="rgb(217, 217, 217)"/><rect x="192.4" y="765" width="5.9" height="5.3" fill="rgb(206, 206, 206)"/><rect x="198.0" y="765" width="5.9" height="5.3" fill="rgb(222, 218, 214)"/><rect x="203.6" y="765" width="5.9" height="5.3" fill="rgb(220, 219, 217)"/><rect x="209.3" y="765" width="5.9" height="5.3" fill="rgb(224, 220, 216)"/><rect x="214.9" y="765" width="5.9" height="5.3" fill="rgb(226, 225, 223)"/><rect x="220.5" y="765" width="5.9" height="5.3" fill="rgb(204, 203, 201)"/><rect x="226.1" y="765" width="5.9" height="5.3" fill="rgb(239, 235, 231)"/><rect x="231.7" y="765" width="5.9" height="5.3" fill="rgb(205, 205, 205)"/><rect x="237.3" y="765" width="5.9" height="5.3" fill="rgb(229, 228, 226)"/><rect x="243.0" y="765" width="5.9" height="5.3" fill="rgb(204, 208, 214)"/><rect x="248.6" y="765" width="5.9" height="5.3" fill="rgb(207, 203, 199)"/><rect x="254.2" y="765" width="5.9" height="5.3" fill="rgb(233, 232, 230)"/><rect x="259.8" y="765" width="5.9" height="5.3" fill="rgb(214, 218, 224)"/><rect x="265.4" y="765" width="5.9" height="5.3" fill="rgb(219, 218, 216)"/><rect x="271.0" y="765" width="5.9" height="5.3" fill="rgb(211, 215, 221)"/><rect x="276.7" y="765" width="5.9" height="5.3" fill="rgb(238, 237, 235)"/><rect x="282.3" y="765" width="5.9" height="5.3" fill="rgb(214, 210, 206)"/><rect x="287.9" y="765" width="5.9" height="5.3" fill="rgb(216, 215, 213)"/><rect x="293.5" y="765" width="5.9" height="5.3" fill="rgb(217, 216, 214)"/><rect x="299.1" y="765" width="5.9" height="5.3" fill="rgb(224, 223, 221)"/><rect x="304.7" y="765" width="5.9" height="5.3" fill="rgb(212, 208, 204)"/><rect x="310.4" y="765" width="5.9" height="5.3" fill="rgb(209, 205, 201)"/><rect x="316.0" y="765" width="5.9" height="5.3" fill="rgb(235, 235, 235)"/><rect x="321.6" y="765" width="5.9" height="5.3" fill="rgb(211, 215, 221)"/><rect x="327.2" y="765" width="5.9" height="5.3" fill="rgb(240, 236, 232)"/><rect x="332.8" y="765" width="5.9" height="5.3" fill="rgb(204, 203, 201)"/><rect x="338.4" y="765" width="5.9" height="5.3" fill="rgb(230, 226, 222)"/><rect x="344.1" y="765" width="5.9" height="5.3" fill="rgb(213, 217, 223)"/><rect x="349.7" y="765" width="5.9" height="5.3" fill="rgb(206, 205, 203)"/><rect x="355.3" y="765" width="5.9" height="5.3" fill="rgb(232, 236, 242)"/><rect x="360.9" y="765" width="5.9" height="5.3" fill="rgb(236, 232, 228)"/><rect x="366.5" y="765" width="5.9" height="5.3" fill="rgb(221, 217, 213)"/><rect x="372.1" y="765" width="5.9" height="5.3" fill="rgb(228, 227, 225)"/><rect x="377.8" y="765" width="5.9" height="5.3" fill="rgb(219, 219, 219)"/><rect x="383.4" y="765" width="5.9" height="5.3" fill="rgb(205, 204, 202)"/><rect x="425.0" y="750" width="5.7" height="5.3" fill="rgb(218, 217, 215)"/><rect x="435.7" y="750" width="5.7" height="5.3" fill="rgb(221, 220, 218)"/><rect x="446.4" y="750" width="5.7" height="5.3" fill="rgb(218, 218, 218)"/><rect x="451.8" y="750" width="5.7" height="5.3" fill="rgb(234, 233, 231)"/><rect x="457.2" y="750" width="5.7" height="5.3" fill="rgb(220, 220, 220)"/><rect x="489.3" y="750" width="5.7" height="5.3" fill="rgb(222, 218, 214)"/><rect x="510.8" y="750" width="5.7" height="5.3" fill="rgb(230, 226, 222)"/><rect x="521.5" y="750" width="5.7" height="5.3" fill="rgb(182, 186, 192)"/><rect x="425.0" y="755" width="5.7" height="5.3" fill="rgb(182, 182, 182)"/><rect x="430.4" y="755" width="5.7" height="5.3" fill="rgb(217, 221, 227)"/><rect x="435.7" y="755" width="5.7" height="5.3" fill="rgb(217, 217, 217)"/><rect x="441.1" y="755" width="5.7" height="5.3" fill="rgb(186, 185, 183)"/><rect x="446.4" y="755" width="5.7" height="5.3" fill="rgb(178, 182, 188)"/><rect x="451.8" y="755" width="5.7" height="5.3" fill="rgb(223, 219, 215)"/><rect x="457.2" y="755" width="5.7" height="5.3" fill="rgb(187, 186, 184)"/><rect x="462.5" y="755" width="5.7" height="5.3" fill="rgb(180, 184, 190)"/><rect x="467.9" y="755" width="5.7" height="5.3" fill="rgb(214, 218, 224)"/><rect x="473.2" y="755" width="5.7" height="5.3" fill="rgb(179, 178, 176)"/><rect x="478.6" y="755" width="5.7" height="5.3" fill="rgb(213, 209, 205)"/><rect x="484.0" y="755" width="5.7" height="5.3" fill="rgb(231, 227, 223)"/><rect x="489.3" y="755" width="5.7" height="5.3" fill="rgb(204, 203, 201)"/><rect x="494.7" y="755" width="5.7" height="5.3" fill="rgb(228, 228, 228)"/><rect x="500.0" y="755" width="5.7" height="5.3" fill="rgb(212, 208, 204)"/><rect x="505.4" y="755" width="5.7" height="5.3" fill="rgb(195, 195, 195)"/><rect x="510.8" y="755" width="5.7" height="5.3" fill="rgb(183, 183, 183)"/><rect x="516.1" y="755" width="5.7" height="5.3" fill="rgb(212, 208, 204)"/><rect x="521.5" y="755" width="5.7" height="5.3" fill="rgb(196, 196, 196)"/><rect x="526.8" y="755" width="5.7" height="5.3" fill="rgb(215, 215, 215)"/><rect x="532.2" y="755" width="5.7" height="5.3" fill="rgb(184, 183, 181)"/><rect x="537.6" y="755" width="5.7" height="5.3" fill="rgb(194, 198, 204)"/><rect x="542.9" y="755" width="5.7" height="5.3" fill="rgb(216, 216, 216)"/><rect x="548.3" y="755" width="5.7" height="5.3" fill="rgb(179, 175, 171)"/><rect x="553.6" y="755" width="5.7" height="5.3" fill="rgb(195, 191, 187)"/><rect x="425.0" y="760" width="5.7" height="5.3" fill="rgb(236, 235, 233)"/><rect x="430.4" y="760" width="5.7" height="5.3" fill="rgb(222, 221, 219)"/><rect x="435.7" y="760" width="5.7" height="5.3" fill="rgb(219, 223, 229)"/><rect x="441.1" y="760" width="5.7" height="5.3" fill="rgb(210, 210, 210)"/><rect x="446.4" y="760" width="5.7" height="5.3" fill="rgb(201, 205, 211)"/><rect x="451.8" y="760" width="5.7" height="5.3" fill="rgb(225, 224, 222)"/><rect x="457.2" y="760" width="5.7" height="5.3" fill="rgb(211, 207, 203)"/><rect x="462.5" y="760" width="5.7" height="5.3" fill="rgb(218, 222, 228)"/><rect x="467.9" y="760" width="5.7" height="5.3" fill="rgb(227, 227, 227)"/><rect x="473.2" y="760" width="5.7" height="5.3" fill="rgb(234, 230, 226)"/><rect x="478.6" y="760" width="5.7" height="5.3" fill="rgb(237, 236, 234)"/><rect x="484.0" y="760" width="5.7" height="5.3" fill="rgb(216, 220, 226)"/><rect x="489.3" y="760" width="5.7" height="5.3" fill="rgb(230, 230, 230)"/><rect x="494.7" y="760" width="5.7" height="5.3" fill="rgb(230, 226, 222)"/><rect x="500.0" y="760" width="5.7" height="5.3" fill="rgb(225, 225, 225)"/><rect x="505.4" y="760" width="5.7" height="5.3" fill="rgb(205, 204, 202)"/><rect x="510.8" y="760" width="5.7" height="5.3" fill="rgb(199, 203, 209)"/><rect x="516.1" y="760" width="5.7" height="5.3" fill="rgb(200, 204, 210)"/><rect x="521.5" y="760" width="5.7" height="5.3" fill="rgb(213, 217, 223)"/><rect x="526.8" y="760" width="5.7" height="5.3" fill="rgb(198, 202, 208)"/><rect x="532.2" y="760" width="5.7" height="5.3" fill="rgb(216, 220, 226)"/><rect x="537.6" y="760" width="5.7" height="5.3" fill="rgb(200, 200, 200)"/><rect x="542.9" y="760" width="5.7" height="5.3" fill="rgb(214, 214, 214)"/><rect x="548.3" y="760" width="5.7" height="5.3" fill="rgb(232, 231, 229)"/><rect x="553.6" y="760" width="5.7" height="5.3" fill="rgb(219, 218, 216)"/><rect x="125.0" y="810" width="5.9" height="5.3" fill="rgb(220, 216, 212)"/><rect x="130.6" y="810" width="5.9" height="5.3" fill="rgb(196, 196, 196)"/><rect x="136.2" y="810" width="5.9" height="5.3" fill="rgb(228, 232, 238)"/><rect x="141.8" y="810" width="5.9" height="5.3" fill="rgb(233, 229, 225)"/><rect x="147.4" y="810" width="5.9" height="5.3" fill="rgb(196, 200, 206)"/><rect x="153.0" y="810" width="5.9" height="5.3" fill="rgb(208, 207, 205)"/><rect x="158.6" y="810" width="5.9" height="5.3" fill="rgb(223, 223, 223)"/><rect x="164.2" y="810" width="5.9" height="5.3" fill="rgb(200, 199, 197)"/><rect x="169.8" y="810" width="5.9" height="5.3" fill="rgb(199, 195, 191)"/><rect x="175.4" y="810" width="5.9" height="5.3" fill="rgb(189, 189, 189)"/><rect x="181.0" y="810" width="5.9" height="5.3" fill="rgb(216, 220, 226)"/><rect x="186.6" y="810" width="5.9" height="5.3" fill="rgb(212, 212, 212)"/><rect x="192.2" y="810" width="5.9" height="5.3" fill="rgb(201, 201, 201)"/><rect x="197.9" y="810" width="5.9" height="5.3" fill="rgb(194, 193, 191)"/><rect x="203.5" y="810" width="5.9" height="5.3" fill="rgb(233, 232, 230)"/><rect x="209.1" y="810" width="5.9" height="5.3" fill="rgb(203, 199, 195)"/><rect x="214.7" y="810" width="5.9" height="5.3" fill="rgb(218, 214, 210)"/><rect x="220.3" y="810" width="5.9" height="5.3" fill="rgb(219, 219, 219)"/><rect x="225.9" y="810" width="5.9" height="5.3" fill="rgb(199, 203, 209)"/><rect x="231.5" y="810" width="5.9" height="5.3" fill="rgb(217, 221, 227)"/><rect x="237.1" y="810" width="5.9" height="5.3" fill="rgb(197, 201, 207)"/><rect x="242.7" y="810" width="5.9" height="5.3" fill="rgb(217, 213, 209)"/><rect x="248.3" y="810" width="5.9" height="5.3" fill="rgb(204, 200, 196)"/><rect x="253.9" y="810" width="5.9" height="5.3" fill="rgb(207, 203, 199)"/><rect x="259.5" y="810" width="5.9" height="5.3" fill="rgb(192, 191, 189)"/><rect x="265.1" y="810" width="5.9" height="5.3" fill="rgb(204, 200, 196)"/><rect x="270.7" y="810" width="5.9" height="5.3" fill="rgb(194, 193, 191)"/><rect x="276.3" y="810" width="5.9" height="5.3" fill="rgb(191, 191, 191)"/><rect x="281.9" y="810" width="5.9" height="5.3" fill="rgb(202, 201, 199)"/><rect x="287.5" y="810" width="5.9" height="5.3" fill="rgb(208, 208, 208)"/><rect x="293.1" y="810" width="5.9" height="5.3" fill="rgb(207, 203, 199)"/><rect x="298.7" y="810" width="5.9" height="5.3" fill="rgb(192, 188, 184)"/><rect x="304.3" y="810" width="5.9" height="5.3" fill="rgb(226, 222, 218)"/><rect x="309.9" y="810" width="5.9" height="5.3" fill="rgb(212, 208, 204)"/><rect x="315.5" y="810" width="5.9" height="5.3" fill="rgb(219, 223, 229)"/><rect x="321.1" y="810" width="5.9" height="5.3" fill="rgb(227, 227, 227)"/><rect x="326.8" y="810" width="5.9" height="5.3" fill="rgb(221, 225, 231)"/><rect x="332.4" y="810" width="5.9" height="5.3" fill="rgb(183, 187, 193)"/><rect x="338.0" y="810" width="5.9" height="5.3" fill="rgb(194, 194, 194)"/><rect x="343.6" y="810" width="5.9" height="5.3" fill="rgb(201, 201, 201)"/><rect x="349.2" y="810" width="5.9" height="5.3" fill="rgb(235, 231, 227)"/><rect x="354.8" y="810" width="5.9" height="5.3" fill="rgb(181, 185, 191)"/><rect x="360.4" y="810" width="5.9" height="5.3" fill="rgb(224, 228, 234)"/><rect x="366.0" y="810" width="5.9" height="5.3" fill="rgb(220, 224, 230)"/><rect x="371.6" y="810" width="5.9" height="5.3" fill="rgb(198, 198, 198)"/><rect x="377.2" y="810" width="5.9" height="5.3" fill="rgb(219, 218, 216)"/><rect x="382.8" y="810" width="5.9" height="5.3" fill="rgb(211, 211, 211)"/><rect x="388.4" y="810" width="5.9" height="5.3" fill="rgb(214, 210, 206)"/><rect x="125.0" y="815" width="5.9" height="5.3" fill="rgb(210, 210, 210)"/><rect x="130.6" y="815" width="5.9" height="5.3" fill="rgb(215, 211, 207)"/><rect x="136.2" y="815" width="5.9" height="5.3" fill="rgb(191, 195, 201)"/><rect x="141.8" y="815" width="5.9" height="5.3" fill="rgb(192, 196, 202)"/><rect x="147.4" y="815" width="5.9" height="5.3" fill="rgb(208, 212, 218)"/><rect x="153.0" y="815" width="5.9" height="5.3" fill="rgb(196, 196, 196)"/><rect x="158.6" y="815" width="5.9" height="5.3" fill="rgb(185, 189, 195)"/><rect x="164.2" y="815" width="5.9" height="5.3" fill="rgb(199, 198, 196)"/><rect x="169.8" y="815" width="5.9" height="5.3" fill="rgb(167, 171, 177)"/><rect x="175.4" y="815" width="5.9" height="5.3" fill="rgb(215, 211, 207)"/><rect x="181.0" y="815" width="5.9" height="5.3" fill="rgb(198, 197, 195)"/><rect x="186.6" y="815" width="5.9" height="5.3" fill="rgb(183, 183, 183)"/><rect x="192.2" y="815" width="5.9" height="5.3" fill="rgb(201, 197, 193)"/><rect x="197.9" y="815" width="5.9" height="5.3" fill="rgb(197, 197, 197)"/><rect x="203.5" y="815" width="5.9" height="5.3" fill="rgb(222, 222, 222)"/><rect x="209.1" y="815" width="5.9" height="5.3" fill="rgb(191, 195, 201)"/><rect x="214.7" y="815" width="5.9" height="5.3" fill="rgb(203, 199, 195)"/><rect x="220.3" y="815" width="5.9" height="5.3" fill="rgb(178, 178, 178)"/><rect x="225.9" y="815" width="5.9" height="5.3" fill="rgb(177, 173, 169)"/><rect x="231.5" y="815" width="5.9" height="5.3" fill="rgb(214, 213, 211)"/><rect x="237.1" y="815" width="5.9" height="5.3" fill="rgb(171, 175, 181)"/><rect x="242.7" y="815" width="5.9" height="5.3" fill="rgb(221, 217, 213)"/><rect x="248.3" y="815" width="5.9" height="5.3" fill="rgb(175, 179, 185)"/><rect x="253.9" y="815" width="5.9" height="5.3" fill="rgb(192, 188, 184)"/><rect x="259.5" y="815" width="5.9" height="5.3" fill="rgb(207, 203, 199)"/><rect x="265.1" y="815" width="5.9" height="5.3" fill="rgb(174, 174, 174)"/><rect x="270.7" y="815" width="5.9" height="5.3" fill="rgb(197, 196, 194)"/><rect x="276.3" y="815" width="5.9" height="5.3" fill="rgb(222, 218, 214)"/><rect x="281.9" y="815" width="5.9" height="5.3" fill="rgb(193, 189, 185)"/><rect x="287.5" y="815" width="5.9" height="5.3" fill="rgb(223, 223, 223)"/><rect x="293.1" y="815" width="5.9" height="5.3" fill="rgb(231, 230, 228)"/><rect x="298.7" y="815" width="5.9" height="5.3" fill="rgb(190, 190, 190)"/><rect x="304.3" y="815" width="5.9" height="5.3" fill="rgb(211, 210, 208)"/><rect x="309.9" y="815" width="5.9" height="5.3" fill="rgb(179, 175, 171)"/><rect x="315.5" y="815" width="5.9" height="5.3" fill="rgb(214, 210, 206)"/><rect x="321.1" y="815" width="5.9" height="5.3" fill="rgb(212, 211, 209)"/><rect x="326.8" y="815" width="5.9" height="5.3" fill="rgb(213, 209, 205)"/><rect x="332.4" y="815" width="5.9" height="5.3" fill="rgb(226, 225, 223)"/><rect x="338.0" y="815" width="5.9" height="5.3" fill="rgb(185, 181, 177)"/><rect x="343.6" y="815" width="5.9" height="5.3" fill="rgb(175, 174, 172)"/><rect x="349.2" y="815" width="5.9" height="5.3" fill="rgb(207, 203, 199)"/><rect x="354.8" y="815" width="5.9" height="5.3" fill="rgb(190, 194, 200)"/><rect x="360.4" y="815" width="5.9" height="5.3" fill="rgb(181, 177, 173)"/><rect x="366.0" y="815" width="5.9" height="5.3" fill="rgb(189, 185, 181)"/><rect x="371.6" y="815" width="5.9" height="5.3" fill="rgb(172, 172, 172)"/><rect x="377.2" y="815" width="5.9" height="5.3" fill="rgb(208, 212, 218)"/><rect x="382.8" y="815" width="5.9" height="5.3" fill="rgb(180, 179, 177)"/><rect x="388.4" y="815" width="5.9" height="5.3" fill="rgb(211, 210, 208)"/><rect x="125.0" y="820" width="5.9" height="5.3" fill="rgb(222, 221, 219)"/><rect x="130.6" y="820" width="5.9" height="5.3" fill="rgb(218, 217, 215)"/><rect x="136.2" y="820" width="5.9" height="5.3" fill="rgb(226, 225, 223)"/><rect x="141.8" y="820" width="5.9" height="5.3" fill="rgb(232, 228, 224)"/><rect x="147.4" y="820" width="5.9" height="5.3" fill="rgb(203, 202, 200)"/><rect x="153.0" y="820" width="5.9" height="5.3" fill="rgb(218, 217, 215)"/><rect x="158.6" y="820" width="5.9" height="5.3" fill="rgb(233, 229, 225)"/><rect x="164.2" y="820" width="5.9" height="5.3" fill="rgb(233, 232, 230)"/><rect x="169.8" y="820" width="5.9" height="5.3" fill="rgb(208, 204, 200)"/><rect x="175.4" y="820" width="5.9" height="5.3" fill="rgb(223, 227, 233)"/><rect x="181.0" y="820" width="5.9" height="5.3" fill="rgb(228, 228, 228)"/><rect x="186.6" y="820" width="5.9" height="5.3" fill="rgb(208, 208, 208)"/><rect x="192.2" y="820" width="5.9" height="5.3" fill="rgb(220, 220, 220)"/><rect x="197.9" y="820" width="5.9" height="5.3" fill="rgb(235, 234, 232)"/><rect x="203.5" y="820" width="5.9" height="5.3" fill="rgb(208, 208, 208)"/><rect x="209.1" y="820" width="5.9" height="5.3" fill="rgb(204, 204, 204)"/><rect x="214.7" y="820" width="5.9" height="5.3" fill="rgb(211, 210, 208)"/><rect x="220.3" y="820" width="5.9" height="5.3" fill="rgb(214, 210, 206)"/><rect x="225.9" y="820" width="5.9" height="5.3" fill="rgb(218, 222, 228)"/><rect x="231.5" y="820" width="5.9" height="5.3" fill="rgb(216, 220, 226)"/><rect x="237.1" y="820" width="5.9" height="5.3" fill="rgb(233, 229, 225)"/><rect x="242.7" y="820" width="5.9" height="5.3" fill="rgb(235, 234, 232)"/><rect x="248.3" y="820" width="5.9" height="5.3" fill="rgb(220, 216, 212)"/><rect x="253.9" y="820" width="5.9" height="5.3" fill="rgb(223, 223, 223)"/><rect x="259.5" y="820" width="5.9" height="5.3" fill="rgb(214, 213, 211)"/><rect x="265.1" y="820" width="5.9" height="5.3" fill="rgb(213, 217, 223)"/><rect x="270.7" y="820" width="5.9" height="5.3" fill="rgb(228, 224, 220)"/><rect x="276.3" y="820" width="5.9" height="5.3" fill="rgb(216, 216, 216)"/><rect x="281.9" y="820" width="5.9" height="5.3" fill="rgb(233, 233, 233)"/><rect x="287.5" y="820" width="5.9" height="5.3" fill="rgb(226, 225, 223)"/><rect x="293.1" y="820" width="5.9" height="5.3" fill="rgb(233, 233, 233)"/><rect x="298.7" y="820" width="5.9" height="5.3" fill="rgb(237, 236, 234)"/><rect x="304.3" y="820" width="5.9" height="5.3" fill="rgb(219, 223, 229)"/><rect x="309.9" y="820" width="5.9" height="5.3" fill="rgb(227, 223, 219)"/><rect x="315.5" y="820" width="5.9" height="5.3" fill="rgb(221, 221, 221)"/><rect x="321.1" y="820" width="5.9" height="5.3" fill="rgb(218, 214, 210)"/><rect x="326.8" y="820" width="5.9" height="5.3" fill="rgb(199, 203, 209)"/><rect x="332.4" y="820" width="5.9" height="5.3" fill="rgb(229, 233, 239)"/><rect x="338.0" y="820" width="5.9" height="5.3" fill="rgb(220, 220, 220)"/><rect x="343.6" y="820" width="5.9" height="5.3" fill="rgb(206, 202, 198)"/><rect x="349.2" y="820" width="5.9" height="5.3" fill="rgb(221, 220, 218)"/><rect x="354.8" y="820" width="5.9" height="5.3" fill="rgb(228, 232, 238)"/><rect x="360.4" y="820" width="5.9" height="5.3" fill="rgb(207, 203, 199)"/><rect x="366.0" y="820" width="5.9" height="5.3" fill="rgb(214, 214, 214)"/><rect x="371.6" y="820" width="5.9" height="5.3" fill="rgb(203, 203, 203)"/><rect x="377.2" y="820" width="5.9" height="5.3" fill="rgb(218, 222, 228)"/><rect x="382.8" y="820" width="5.9" height="5.3" fill="rgb(229, 233, 239)"/><rect x="388.4" y="820" width="5.9" height="5.3" fill="rgb(217, 216, 214)"/><rect x="440.8" y="805" width="5.6" height="5.3" fill="rgb(203, 202, 200)"/><rect x="451.4" y="805" width="5.6" height="5.3" fill="rgb(230, 229, 227)"/><rect x="456.7" y="805" width="5.6" height="5.3" fill="rgb(201, 201, 201)"/><rect x="461.9" y="805" width="5.6" height="5.3" fill="rgb(223, 222, 220)"/><rect x="467.2" y="805" width="5.6" height="5.3" fill="rgb(222, 218, 214)"/><rect x="493.6" y="805" width="5.6" height="5.3" fill="rgb(231, 227, 223)"/><rect x="425.0" y="810" width="5.6" height="5.3" fill="rgb(176, 175, 173)"/><rect x="430.3" y="810" width="5.6" height="5.3" fill="rgb(215, 215, 215)"/><rect x="435.6" y="810" width="5.6" height="5.3" fill="rgb(197, 196, 194)"/><rect x="440.8" y="810" width="5.6" height="5.3" fill="rgb(220, 219, 217)"/><rect x="446.1" y="810" width="5.6" height="5.3" fill="rgb(178, 177, 175)"/><rect x="451.4" y="810" width="5.6" height="5.3" fill="rgb(185, 181, 177)"/><rect x="456.7" y="810" width="5.6" height="5.3" fill="rgb(172, 176, 182)"/><rect x="461.9" y="810" width="5.6" height="5.3" fill="rgb(184, 184, 184)"/><rect x="467.2" y="810" width="5.6" height="5.3" fill="rgb(173, 177, 183)"/><rect x="472.5" y="810" width="5.6" height="5.3" fill="rgb(223, 227, 233)"/><rect x="477.8" y="810" width="5.6" height="5.3" fill="rgb(215, 215, 215)"/><rect x="483.1" y="810" width="5.6" height="5.3" fill="rgb(190, 189, 187)"/><rect x="488.3" y="810" width="5.6" height="5.3" fill="rgb(209, 213, 219)"/><rect x="493.6" y="810" width="5.6" height="5.3" fill="rgb(192, 188, 184)"/><rect x="498.9" y="810" width="5.6" height="5.3" fill="rgb(175, 175, 175)"/><rect x="504.2" y="810" width="5.6" height="5.3" fill="rgb(176, 180, 186)"/><rect x="509.4" y="810" width="5.6" height="5.3" fill="rgb(231, 227, 223)"/><rect x="514.7" y="810" width="5.6" height="5.3" fill="rgb(227, 223, 219)"/><rect x="425.0" y="815" width="5.6" height="5.3" fill="rgb(224, 220, 216)"/><rect x="430.3" y="815" width="5.6" height="5.3" fill="rgb(220, 224, 230)"/><rect x="435.6" y="815" width="5.6" height="5.3" fill="rgb(218, 217, 215)"/><rect x="440.8" y="815" width="5.6" height="5.3" fill="rgb(237, 236, 234)"/><rect x="446.1" y="815" width="5.6" height="5.3" fill="rgb(233, 233, 233)"/><rect x="451.4" y="815" width="5.6" height="5.3" fill="rgb(204, 203, 201)"/><rect x="456.7" y="815" width="5.6" height="5.3" fill="rgb(210, 214, 220)"/><rect x="461.9" y="815" width="5.6" height="5.3" fill="rgb(216, 215, 213)"/><rect x="467.2" y="815" width="5.6" height="5.3" fill="rgb(208, 204, 200)"/><rect x="472.5" y="815" width="5.6" height="5.3" fill="rgb(202, 202, 202)"/><rect x="477.8" y="815" width="5.6" height="5.3" fill="rgb(210, 206, 202)"/><rect x="483.1" y="815" width="5.6" height="5.3" fill="rgb(209, 209, 209)"/><rect x="488.3" y="815" width="5.6" height="5.3" fill="rgb(206, 202, 198)"/><rect x="493.6" y="815" width="5.6" height="5.3" fill="rgb(202, 202, 202)"/><rect x="498.9" y="815" width="5.6" height="5.3" fill="rgb(202, 202, 202)"/><rect x="504.2" y="815" width="5.6" height="5.3" fill="rgb(227, 223, 219)"/><rect x="509.4" y="815" width="5.6" height="5.3" fill="rgb(234, 234, 234)"/><rect x="514.7" y="815" width="5.6" height="5.3" fill="rgb(224, 224, 224)"/><rect x="125.0" y="865" width="5.9" height="5.3" fill="rgb(202, 198, 194)"/><rect x="130.6" y="865" width="5.9" height="5.3" fill="rgb(187, 187, 187)"/><rect x="136.2" y="865" width="5.9" height="5.3" fill="rgb(225, 225, 225)"/><rect x="141.9" y="865" width="5.9" height="5.3" fill="rgb(221, 225, 231)"/><rect x="147.5" y="865" width="5.9" height="5.3" fill="rgb(195, 191, 187)"/><rect x="153.1" y="865" width="5.9" height="5.3" fill="rgb(230, 226, 222)"/><rect x="158.7" y="865" width="5.9" height="5.3" fill="rgb(201, 205, 211)"/><rect x="164.3" y="865" width="5.9" height="5.3" fill="rgb(201, 201, 201)"/><rect x="169.9" y="865" width="5.9" height="5.3" fill="rgb(197, 201, 207)"/><rect x="175.6" y="865" width="5.9" height="5.3" fill="rgb(226, 230, 236)"/><rect x="181.2" y="865" width="5.9" height="5.3" fill="rgb(208, 207, 205)"/><rect x="186.8" y="865" width="5.9" height="5.3" fill="rgb(203, 203, 203)"/><rect x="192.4" y="865" width="5.9" height="5.3" fill="rgb(211, 211, 211)"/><rect x="198.0" y="865" width="5.9" height="5.3" fill="rgb(218, 218, 218)"/><rect x="203.6" y="865" width="5.9" height="5.3" fill="rgb(215, 215, 215)"/><rect x="209.3" y="865" width="5.9" height="5.3" fill="rgb(225, 221, 217)"/><rect x="214.9" y="865" width="5.9" height="5.3" fill="rgb(186, 190, 196)"/><rect x="220.5" y="865" width="5.9" height="5.3" fill="rgb(212, 212, 212)"/><rect x="226.1" y="865" width="5.9" height="5.3" fill="rgb(193, 197, 203)"/><rect x="231.7" y="865" width="5.9" height="5.3" fill="rgb(188, 188, 188)"/><rect x="237.3" y="865" width="5.9" height="5.3" fill="rgb(216, 216, 216)"/><rect x="243.0" y="865" width="5.9" height="5.3" fill="rgb(233, 229, 225)"/><rect x="248.6" y="865" width="5.9" height="5.3" fill="rgb(218, 222, 228)"/><rect x="254.2" y="865" width="5.9" height="5.3" fill="rgb(213, 217, 223)"/><rect x="259.8" y="865" width="5.9" height="5.3" fill="rgb(191, 195, 201)"/><rect x="265.4" y="865" width="5.9" height="5.3" fill="rgb(202, 198, 194)"/><rect x="271.0" y="865" width="5.9" height="5.3" fill="rgb(195, 195, 195)"/><rect x="276.7" y="865" width="5.9" height="5.3" fill="rgb(193, 192, 190)"/><rect x="282.3" y="865" width="5.9" height="5.3" fill="rgb(229, 229, 229)"/><rect x="287.9" y="865" width="5.9" height="5.3" fill="rgb(201, 205, 211)"/><rect x="293.5" y="865" width="5.9" height="5.3" fill="rgb(213, 212, 210)"/><rect x="299.1" y="865" width="5.9" height="5.3" fill="rgb(232, 232, 232)"/><rect x="304.7" y="865" width="5.9" height="5.3" fill="rgb(226, 226, 226)"/><rect x="310.4" y="865" width="5.9" height="5.3" fill="rgb(194, 198, 204)"/><rect x="316.0" y="865" width="5.9" height="5.3" fill="rgb(216, 212, 208)"/><rect x="321.6" y="865" width="5.9" height="5.3" fill="rgb(229, 225, 221)"/><rect x="327.2" y="865" width="5.9" height="5.3" fill="rgb(193, 193, 193)"/><rect x="332.8" y="865" width="5.9" height="5.3" fill="rgb(218, 222, 228)"/><rect x="338.4" y="865" width="5.9" height="5.3" fill="rgb(197, 196, 194)"/><rect x="344.1" y="865" width="5.9" height="5.3" fill="rgb(216, 220, 226)"/><rect x="349.7" y="865" width="5.9" height="5.3" fill="rgb(217, 216, 214)"/><rect x="355.3" y="865" width="5.9" height="5.3" fill="rgb(205, 201, 197)"/><rect x="360.9" y="865" width="5.9" height="5.3" fill="rgb(209, 208, 206)"/><rect x="366.5" y="865" width="5.9" height="5.3" fill="rgb(233, 229, 225)"/><rect x="372.1" y="865" width="5.9" height="5.3" fill="rgb(193, 197, 203)"/><rect x="377.8" y="865" width="5.9" height="5.3" fill="rgb(234, 230, 226)"/><rect x="383.4" y="865" width="5.9" height="5.3" fill="rgb(198, 194, 190)"/><rect x="125.0" y="870" width="5.9" height="5.3" fill="rgb(212, 216, 222)"/><rect x="130.6" y="870" width="5.9" height="5.3" fill="rgb(204, 208, 214)"/><rect x="136.2" y="870" width="5.9" height="5.3" fill="rgb(184, 180, 176)"/><rect x="141.9" y="870" width="5.9" height="5.3" fill="rgb(194, 190, 186)"/><rect x="147.5" y="870" width="5.9" height="5.3" fill="rgb(186, 186, 186)"/><rect x="153.1" y="870" width="5.9" height="5.3" fill="rgb(180, 180, 180)"/><rect x="158.7" y="870" width="5.9" height="5.3" fill="rgb(185, 184, 182)"/><rect x="164.3" y="870" width="5.9" height="5.3" fill="rgb(183, 179, 175)"/><rect x="169.9" y="870" width="5.9" height="5.3" fill="rgb(216, 220, 226)"/><rect x="175.6" y="870" width="5.9" height="5.3" fill="rgb(212, 216, 222)"/><rect x="181.2" y="870" width="5.9" height="5.3" fill="rgb(193, 197, 203)"/><rect x="186.8" y="870" width="5.9" height="5.3" fill="rgb(182, 182, 182)"/><rect x="192.4" y="870" width="5.9" height="5.3" fill="rgb(210, 210, 210)"/><rect x="198.0" y="870" width="5.9" height="5.3" fill="rgb(191, 187, 183)"/><rect x="203.6" y="870" width="5.9" height="5.3" fill="rgb(229, 228, 226)"/><rect x="209.3" y="870" width="5.9" height="5.3" fill="rgb(199, 199, 199)"/><rect x="214.9" y="870" width="5.9" height="5.3" fill="rgb(173, 172, 170)"/><rect x="220.5" y="870" width="5.9" height="5.3" fill="rgb(227, 226, 224)"/><rect x="226.1" y="870" width="5.9" height="5.3" fill="rgb(218, 214, 210)"/><rect x="231.7" y="870" width="5.9" height="5.3" fill="rgb(198, 202, 208)"/><rect x="237.3" y="870" width="5.9" height="5.3" fill="rgb(199, 199, 199)"/><rect x="243.0" y="870" width="5.9" height="5.3" fill="rgb(175, 179, 185)"/><rect x="248.6" y="870" width="5.9" height="5.3" fill="rgb(211, 210, 208)"/><rect x="254.2" y="870" width="5.9" height="5.3" fill="rgb(174, 170, 166)"/><rect x="259.8" y="870" width="5.9" height="5.3" fill="rgb(231, 230, 228)"/><rect x="265.4" y="870" width="5.9" height="5.3" fill="rgb(217, 216, 214)"/><rect x="271.0" y="870" width="5.9" height="5.3" fill="rgb(228, 224, 220)"/><rect x="276.7" y="870" width="5.9" height="5.3" fill="rgb(216, 212, 208)"/><rect x="282.3" y="870" width="5.9" height="5.3" fill="rgb(217, 213, 209)"/><rect x="287.9" y="870" width="5.9" height="5.3" fill="rgb(211, 211, 211)"/><rect x="293.5" y="870" width="5.9" height="5.3" fill="rgb(202, 201, 199)"/><rect x="299.1" y="870" width="5.9" height="5.3" fill="rgb(186, 190, 196)"/><rect x="304.7" y="870" width="5.9" height="5.3" fill="rgb(210, 210, 210)"/><rect x="310.4" y="870" width="5.9" height="5.3" fill="rgb(230, 229, 227)"/><rect x="316.0" y="870" width="5.9" height="5.3" fill="rgb(188, 187, 185)"/><rect x="321.6" y="870" width="5.9" height="5.3" fill="rgb(219, 215, 211)"/><rect x="327.2" y="870" width="5.9" height="5.3" fill="rgb(189, 188, 186)"/><rect x="332.8" y="870" width="5.9" height="5.3" fill="rgb(203, 202, 200)"/><rect x="338.4" y="870" width="5.9" height="5.3" fill="rgb(174, 173, 171)"/><rect x="344.1" y="870" width="5.9" height="5.3" fill="rgb(207, 203, 199)"/><rect x="349.7" y="870" width="5.9" height="5.3" fill="rgb(223, 227, 233)"/><rect x="355.3" y="870" width="5.9" height="5.3" fill="rgb(219, 219, 219)"/><rect x="360.9" y="870" width="5.9" height="5.3" fill="rgb(197, 196, 194)"/><rect x="366.5" y="870" width="5.9" height="5.3" fill="rgb(228, 228, 228)"/><rect x="372.1" y="870" width="5.9" height="5.3" fill="rgb(168, 172, 178)"/><rect x="377.8" y="870" width="5.9" height="5.3" fill="rgb(208, 204, 200)"/><rect x="383.4" y="870" width="5.9" height="5.3" fill="rgb(184, 180, 176)"/><rect x="125.0" y="875" width="5.9" height="5.3" fill="rgb(222, 222, 222)"/><rect x="130.6" y="875" width="5.9" height="5.3" fill="rgb(239, 238, 236)"/><rect x="136.2" y="875" width="5.9" height="5.3" fill="rgb(216, 215, 213)"/><rect x="141.9" y="875" width="5.9" height="5.3" fill="rgb(197, 201, 207)"/><rect x="147.5" y="875" width="5.9" height="5.3" fill="rgb(224, 223, 221)"/><rect x="153.1" y="875" width="5.9" height="5.3" fill="rgb(233, 229, 225)"/><rect x="158.7" y="875" width="5.9" height="5.3" fill="rgb(214, 213, 211)"/><rect x="164.3" y="875" width="5.9" height="5.3" fill="rgb(203, 207, 213)"/><rect x="169.9" y="875" width="5.9" height="5.3" fill="rgb(199, 203, 209)"/><rect x="175.6" y="875" width="5.9" height="5.3" fill="rgb(227, 226, 224)"/><rect x="181.2" y="875" width="5.9" height="5.3" fill="rgb(200, 200, 200)"/><rect x="186.8" y="875" width="5.9" height="5.3" fill="rgb(222, 226, 232)"/><rect x="192.4" y="875" width="5.9" height="5.3" fill="rgb(216, 216, 216)"/><rect x="198.0" y="875" width="5.9" height="5.3" fill="rgb(222, 221, 219)"/><rect x="203.6" y="875" width="5.9" height="5.3" fill="rgb(217, 216, 214)"/><rect x="209.3" y="875" width="5.9" height="5.3" fill="rgb(217, 213, 209)"/><rect x="214.9" y="875" width="5.9" height="5.3" fill="rgb(208, 204, 200)"/><rect x="220.5" y="875" width="5.9" height="5.3" fill="rgb(239, 235, 231)"/><rect x="226.1" y="875" width="5.9" height="5.3" fill="rgb(205, 209, 215)"/><rect x="231.7" y="875" width="5.9" height="5.3" fill="rgb(229, 228, 226)"/><rect x="237.3" y="875" width="5.9" height="5.3" fill="rgb(239, 235, 231)"/><rect x="243.0" y="875" width="5.9" height="5.3" fill="rgb(226, 230, 236)"/><rect x="248.6" y="875" width="5.9" height="5.3" fill="rgb(210, 214, 220)"/><rect x="254.2" y="875" width="5.9" height="5.3" fill="rgb(220, 224, 230)"/><rect x="259.8" y="875" width="5.9" height="5.3" fill="rgb(214, 213, 211)"/><rect x="265.4" y="875" width="5.9" height="5.3" fill="rgb(213, 217, 223)"/><rect x="271.0" y="875" width="5.9" height="5.3" fill="rgb(215, 219, 225)"/><rect x="276.7" y="875" width="5.9" height="5.3" fill="rgb(234, 233, 231)"/><rect x="282.3" y="875" width="5.9" height="5.3" fill="rgb(201, 205, 211)"/><rect x="287.9" y="875" width="5.9" height="5.3" fill="rgb(222, 221, 219)"/><rect x="293.5" y="875" width="5.9" height="5.3" fill="rgb(201, 205, 211)"/><rect x="299.1" y="875" width="5.9" height="5.3" fill="rgb(204, 208, 214)"/><rect x="304.7" y="875" width="5.9" height="5.3" fill="rgb(200, 200, 200)"/><rect x="310.4" y="875" width="5.9" height="5.3" fill="rgb(200, 204, 210)"/><rect x="316.0" y="875" width="5.9" height="5.3" fill="rgb(210, 206, 202)"/><rect x="321.6" y="875" width="5.9" height="5.3" fill="rgb(218, 214, 210)"/><rect x="327.2" y="875" width="5.9" height="5.3" fill="rgb(224, 228, 234)"/><rect x="332.8" y="875" width="5.9" height="5.3" fill="rgb(213, 209, 205)"/><rect x="338.4" y="875" width="5.9" height="5.3" fill="rgb(229, 225, 221)"/><rect x="344.1" y="875" width="5.9" height="5.3" fill="rgb(201, 205, 211)"/><rect x="349.7" y="875" width="5.9" height="5.3" fill="rgb(235, 231, 227)"/><rect x="355.3" y="875" width="5.9" height="5.3" fill="rgb(208, 207, 205)"/><rect x="360.9" y="875" width="5.9" height="5.3" fill="rgb(207, 207, 207)"/><rect x="366.5" y="875" width="5.9" height="5.3" fill="rgb(230, 226, 222)"/><rect x="372.1" y="875" width="5.9" height="5.3" fill="rgb(211, 210, 208)"/><rect x="377.8" y="875" width="5.9" height="5.3" fill="rgb(235, 235, 235)"/><rect x="383.4" y="875" width="5.9" height="5.3" fill="rgb(233, 229, 225)"/><rect x="471.8" y="860" width="5.5" height="5.3" fill="rgb(206, 206, 206)"/><rect x="492.6" y="860" width="5.5" height="5.3" fill="rgb(187, 191, 197)"/><rect x="497.8" y="860" width="5.5" height="5.3" fill="rgb(219, 215, 211)"/><rect x="425.0" y="865" width="5.5" height="5.3" fill="rgb(186, 185, 183)"/><rect x="430.2" y="865" width="5.5" height="5.3" fill="rgb(220, 220, 220)"/><rect x="435.4" y="865" width="5.5" height="5.3" fill="rgb(195, 191, 187)"/><rect x="440.6" y="865" width="5.5" height="5.3" fill="rgb(186, 190, 196)"/><rect x="445.8" y="865" width="5.5" height="5.3" fill="rgb(178, 178, 178)"/><rect x="451.0" y="865" width="5.5" height="5.3" fill="rgb(220, 220, 220)"/><rect x="456.2" y="865" width="5.5" height="5.3" fill="rgb(198, 197, 195)"/><rect x="461.4" y="865" width="5.5" height="5.3" fill="rgb(204, 204, 204)"/><rect x="466.6" y="865" width="5.5" height="5.3" fill="rgb(191, 195, 201)"/><rect x="471.8" y="865" width="5.5" height="5.3" fill="rgb(176, 176, 176)"/><rect x="477.0" y="865" width="5.5" height="5.3" fill="rgb(176, 172, 168)"/><rect x="482.2" y="865" width="5.5" height="5.3" fill="rgb(225, 224, 222)"/><rect x="487.4" y="865" width="5.5" height="5.3" fill="rgb(208, 208, 208)"/><rect x="492.6" y="865" width="5.5" height="5.3" fill="rgb(223, 222, 220)"/><rect x="497.8" y="865" width="5.5" height="5.3" fill="rgb(213, 209, 205)"/><rect x="503.0" y="865" width="5.5" height="5.3" fill="rgb(210, 210, 210)"/><rect x="508.2" y="865" width="5.5" height="5.3" fill="rgb(183, 183, 183)"/><rect x="513.4" y="865" width="5.5" height="5.3" fill="rgb(215, 214, 212)"/><rect x="518.6" y="865" width="5.5" height="5.3" fill="rgb(214, 210, 206)"/><rect x="523.8" y="865" width="5.5" height="5.3" fill="rgb(180, 176, 172)"/><rect x="425.0" y="870" width="5.5" height="5.3" fill="rgb(205, 204, 202)"/><rect x="430.2" y="870" width="5.5" height="5.3" fill="rgb(206, 206, 206)"/><rect x="435.4" y="870" width="5.5" height="5.3" fill="rgb(204, 208, 214)"/><rect x="440.6" y="870" width="5.5" height="5.3" fill="rgb(212, 216, 222)"/><rect x="445.8" y="870" width="5.5" height="5.3" fill="rgb(226, 226, 226)"/><rect x="451.0" y="870" width="5.5" height="5.3" fill="rgb(204, 203, 201)"/><rect x="456.2" y="870" width="5.5" height="5.3" fill="rgb(206, 205, 203)"/><rect x="461.4" y="870" width="5.5" height="5.3" fill="rgb(233, 233, 233)"/><rect x="466.6" y="870" width="5.5" height="5.3" fill="rgb(210, 209, 207)"/><rect x="471.8" y="870" width="5.5" height="5.3" fill="rgb(228, 227, 225)"/><rect x="477.0" y="870" width="5.5" height="5.3" fill="rgb(203, 202, 200)"/><rect x="482.2" y="870" width="5.5" height="5.3" fill="rgb(212, 211, 209)"/><rect x="487.4" y="870" width="5.5" height="5.3" fill="rgb(226, 226, 226)"/><rect x="492.6" y="870" width="5.5" height="5.3" fill="rgb(234, 230, 226)"/><rect x="497.8" y="870" width="5.5" height="5.3" fill="rgb(209, 209, 209)"/><rect x="503.0" y="870" width="5.5" height="5.3" fill="rgb(200, 200, 200)"/><rect x="508.2" y="870" width="5.5" height="5.3" fill="rgb(207, 207, 207)"/><rect x="513.4" y="870" width="5.5" height="5.3" fill="rgb(211, 207, 203)"/><rect x="518.6" y="870" width="5.5" height="5.3" fill="rgb(197, 201, 207)"/><rect x="523.8" y="870" width="5.5" height="5.3" fill="rgb(240, 236, 232)"/></svg>
<!--/ROWS-->
</body></html>
